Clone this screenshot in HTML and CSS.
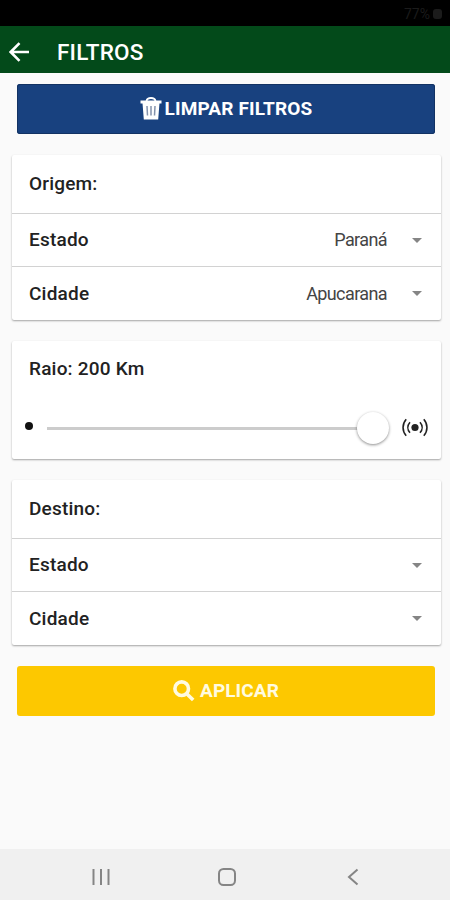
FILE: index.html
```html
<!doctype html>
<html lang="pt-BR">
<head>
	<meta charset="UTF-8">
	<meta name="viewport" content="width=device-width, initial-scale=1">
	<title>Filtros</title>
	<link rel="stylesheet" href="styles.css">
</head>
<body>
	<div class="status">
		<span>77%</span>
		<i class="status-battery"></i>
	</div>
	<header class="topbar">
		<svg class="back" width="20" height="20" viewBox="0 0 20 20"><path d="M10.500 1.200L1.700 10l8.800 8.800M1.700 10H20"/></svg>
		<h1>FILTROS</h1>
	</header>

	<main class="content">
		<button class="btn btn-clear" type="button">
			<svg width="22" height="24" viewBox="0 0 22 24">
				<path class="line" d="M6.500 4C7 1.500 8.500 1 11 1s4 .5 4.500 3"/>
				<path d="M.5 3.500h21v3H.5zM2.500 6h17l-1.300 16.500H3.800z"/>
				<path class="slot" d="M7 9l.5 9.500M11 9v9.500M15 9l-.5 9.500"/>
			</svg>
			<span>LIMPAR FILTROS</span>
		</button>

		<section class="card">
			<h2 class="row row-title">Origem:</h2>
			<div class="row"><strong>Estado</strong><span class="value">Paraná</span><i class="caret"></i></div>
			<div class="row"><strong>Cidade</strong><span class="value">Apucarana</span><i class="caret"></i></div>
		</section>

		<section class="card card-range">
			<h2>Raio: 200 Km</h2>
			<div class="range">
				<i class="dot"></i>
				<div class="track"><i class="knob"></i></div>
				<svg class="radio" width="26" height="20" viewBox="0 0 26 20">
					<circle cx="13" cy="9.500" r="3.600"/>
					<path d="M8 4.200c-2.800 3.200-2.800 7.400 0 10.600M18 4.200c2.800 3.200 2.800 7.400 0 10.600M4.200 1.200c-4.200 4.800-4.200 11.800 0 16.600M21.800 1.200c4.200 4.800 4.200 11.800 0 16.600"/>
				</svg>
			</div>
		</section>

		<section class="card">
			<h2 class="row row-title">Destino:</h2>
			<div class="row"><strong>Estado</strong><i class="caret"></i></div>
			<div class="row"><strong>Cidade</strong><i class="caret"></i></div>
		</section>

		<button class="btn btn-apply" type="button">
			<svg width="22" height="22" viewBox="0 0 22 22"><circle cx="8.700" cy="8.700" r="6.800"/><path d="M13.700 13.700l6.500 6.300"/></svg>
			<span>APLICAR</span>
		</button>
	</main>

	<nav class="navbar">
		<svg width="18" height="18" viewBox="0 0 18 18"><path d="M1.500 1v16M9 1v16M16.500 1v16"/></svg>
		<svg width="18" height="18" viewBox="0 0 18 18"><rect x="1" y="1" width="16" height="16" rx="4.500"/></svg>
		<svg width="18" height="18" viewBox="0 0 18 18"><path d="M13.500 1.500L5 9l8.500 7.500"/></svg>
	</nav>
</body>
</html>
```
FILE: styles.css
```css
*{box-sizing:border-box;}
body,h1,h2{margin:0;padding:0;}
body{display:flex;flex-direction:column;height:900px;background:#fafafa;color:#222;font:18px/24px Roboto, "Liberation Sans", sans-serif;}
svg{display:block;flex:none;fill:none;}

/* top */
.status{display:flex;justify-content:flex-end;align-items:center;gap:3px;height:26px;padding:2px 8px 0 0;background:#000;color:#1b1b1b;font-size:14px;}
.status-battery{width:9px;height:10px;border-radius:3px;background:#1b1b1b;}
.topbar{display:flex;align-items:center;gap:28px;height:47px;padding:4px 9px 0;background:#034a1a;color:#fff;}
.topbar h1{font-size:22.500px;font-weight:500;letter-spacing:.2px;}
.back{stroke:#fff;stroke-width:2.600;}

.content{flex:1;padding:11px 9px 0 12px;}

/* buttons */
.btn{display:flex;justify-content:center;align-items:center;width:418px;height:50px;margin:0 5px;padding:0;border:0;border-radius:3px;color:#fff;font:bold 19px/24px Roboto, "Liberation Sans", sans-serif;}
.btn-clear{gap:3px;background:#18417f;box-shadow:inset 0 0 0 1px #123263;letter-spacing:.15px;}
.btn-clear svg{fill:#fff;}
.btn-clear .line{fill:none;stroke:#fff;stroke-width:1.800;}
.btn-clear .slot{stroke:#8493ad;stroke-width:1.500;}
.btn-apply{gap:5px;background:#fdc800;color:#fffbe0;letter-spacing:.1px;}
.btn-apply svg{stroke:#fffbe0;stroke-width:3.600;}

/* cards */
.card{margin:21px 0;border-radius:2px;background:#fff;box-shadow:0 1px 2px rgba(0,0,0,.35);}
.card h2,.card strong{font-size:19px;font-weight:500;letter-spacing:.2px;}
.row{display:flex;align-items:center;height:53px;padding:0 19px 0 17px;border-bottom:1px solid #d2d2d2;}
.row:last-child{border-bottom:0;}
.row-title{height:59px;}
.row strong{flex:1;}
.value{color:#444;font-size:18px;letter-spacing:-.6px;}
.caret{width:0;height:0;margin-left:25px;border:5px solid transparent;border-top:5px solid #858585;border-bottom:0;}
.card-range{height:118px;padding:16px 13px 0 17px;}

/* slider */
.range{display:flex;align-items:center;height:32px;margin-top:31px;margin-left:-4px;}
.dot{width:8px;height:8px;margin-top:-5px;border-radius:50%;background:#111;}
.track{display:flex;align-items:center;justify-content:flex-end;flex:1;height:3px;margin:0 13px 0 14px;background:#ccc;}
.knob{width:32px;height:32px;border-radius:50%;background:#fff;box-shadow:0 1px 3px rgba(0,0,0,.45);}
.radio{stroke:#222;stroke-width:1.600;}
.radio circle{fill:#222;stroke:none;}

/* system navigation */
.navbar{display:flex;justify-content:space-between;align-items:center;height:51px;padding:4px 88px 0 92px;background:#f0f0f0;}
.navbar svg{stroke:#858585;stroke-width:2;}
```
